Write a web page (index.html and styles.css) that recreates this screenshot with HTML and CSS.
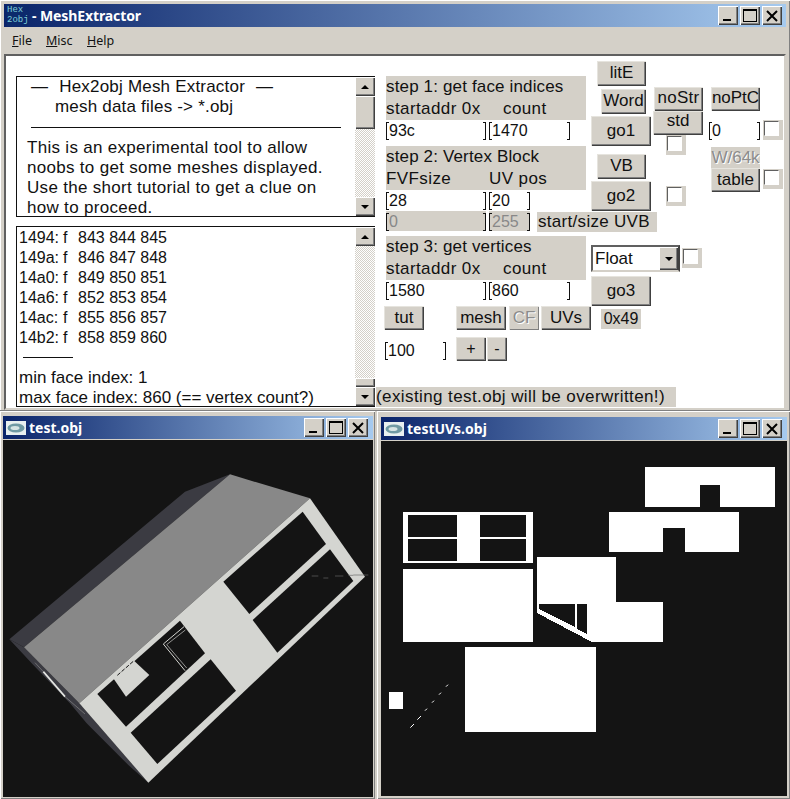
FILE: index.html
```html
<!DOCTYPE html>
<html lang="en">
<head>
<meta charset="utf-8">
<title>MeshExtractor</title>
<link rel="stylesheet" href="styles.css">
</head>
<body>
<div class="desktop">
  <section class="window main-window">
    <header class="titlebar">
      <div class="app-icon"><span>Hex</span><span>2obj</span></div>
      <span class="title-text">- MeshExtractor</span>
      <div class="caption-buttons">
        <div class="cap"><span class="cap-min"></span></div>
        <div class="cap"><span class="cap-max"></span></div>
        <div class="cap cap-close"><svg width="14" height="14" viewBox="0 0 14 14"><path d="M2 2L12 12M12 2L2 12" stroke="#000" stroke-width="2"/></svg></div>
      </div>
    </header>
    <nav class="menubar">
      <span class="menu-file"><u>F</u>ile</span>
      <span class="menu-misc"><u>M</u>isc</span>
      <span class="menu-help"><u>H</u>elp</span>
    </nav>
    <div class="client">
      <div class="left-col">
        <div class="textbox box-intro">
          <div class="text-body">
            <div class="intro-line1"><span>—</span><span>Hex2obj Mesh Extractor</span><span>—</span></div>
            <div class="intro-line2">mesh data files -&gt; *.obj</div>
            <div class="intro-rule"></div>
            <div class="intro-para">This is an experimental tool to allow</div>
            <div class="intro-para">noobs to get some meshes displayed.</div>
            <div class="intro-para">Use the short tutorial to get a clue on</div>
            <div class="intro-para">how to proceed.</div>
          </div>
          <div class="scrollbar">
            <div class="sb-btn"><i class="arrow-up"></i></div>
            <div class="sb-thumb thumb-intro"></div>
            <div class="sb-track"></div>
            <div class="sb-btn"><i class="arrow-down"></i></div>
          </div>
        </div>
        <div class="textbox box-log">
          <div class="text-body log-body">
            <div class="log-row"><span class="log-addr">1494:</span><span class="log-f">f</span><span>843 844 845</span></div>
            <div class="log-row"><span class="log-addr">149a:</span><span class="log-f">f</span><span>846 847 848</span></div>
            <div class="log-row"><span class="log-addr">14a0:</span><span class="log-f">f</span><span>849 850 851</span></div>
            <div class="log-row"><span class="log-addr">14a6:</span><span class="log-f">f</span><span>852 853 854</span></div>
            <div class="log-row"><span class="log-addr">14ac:</span><span class="log-f">f</span><span>855 856 857</span></div>
            <div class="log-row"><span class="log-addr">14b2:</span><span class="log-f">f</span><span>858 859 860</span></div>
            <div class="log-rule"></div>
            <div class="log-row log-large">min face index: 1</div>
            <div class="log-row log-large">max face index: 860 (== vertex count?)</div>
          </div>
          <div class="scrollbar">
            <div class="sb-btn"><i class="arrow-up"></i></div>
            <div class="sb-track"></div>
            <div class="sb-thumb thumb-log"></div>
            <div class="sb-btn"><i class="arrow-down"></i></div>
          </div>
        </div>
      </div>
      <div class="panel">
        <div class="panel-top">
          <div class="col-a">
            <div class="step-label"><div>step 1: get face indices</div><div class="step-sub"><span class="sub-a">startaddr 0x</span><span>count</span></div></div>
            <div class="field-row"><div class="field w100">93c</div><div class="field w81">1470</div></div>
            <div class="step-label step-gap"><div>step 2: Vertex Block</div><div class="step-sub"><span class="sub-b">FVFsize</span><span>UV pos</span></div></div>
            <div class="field-row"><div class="field w100">28</div><div class="field w41">20</div></div>
            <div class="field-row row-uvb">
              <div class="field w100 field-off">0</div><div class="field w41 field-off">255</div>
              <div class="tag tag-uvb">start/size UVB</div>
            </div>
            <div class="step-label step-gap3"><div>step 3: get vertices</div><div class="step-sub"><span class="sub-a">startaddr 0x</span><span>count</span></div></div>
            <div class="field-row"><div class="field w100">1580</div><div class="field w81">860</div></div>
          </div>
          <div class="col-b">
            <div class="btn btn-lite">litE</div>
            <div class="btn btn-word">Word</div>
            <div class="btn btn-go">go1</div>
            <div class="btn btn-vb">VB</div>
            <div class="btn btn-go">go2</div>
            <div class="combo-row">
              <div class="combo"><span class="combo-text">Float</span><div class="combo-btn"><i class="arrow-down"></i></div></div>
              <div class="check check-float"><i></i></div>
            </div>
            <div class="btn btn-go btn-go3">go3</div>
          </div>
          <div class="col-c">
            <div class="btn btn-nostr">noStr</div>
            <div class="btn btn-std">std</div>
            <div class="check check-std"><i></i></div>
            <div class="check check-go2"><i></i></div>
          </div>
          <div class="col-d">
            <div class="btn btn-noptc">noPtC</div>
            <div class="ptc-row"><div class="field w51">0</div><div class="check"><i></i></div></div>
            <div class="btn btn-w64 btn-off">W/64k</div>
            <div class="table-row"><div class="btn btn-table">table</div><div class="check check-table"><i></i></div></div>
          </div>
        </div>
        <div class="bottom-row">
          <div class="btn btn-tut">tut</div>
          <div class="btn btn-mesh">mesh</div>
          <div class="btn btn-cf btn-off">CF</div>
          <div class="btn btn-uvs">UVs</div>
          <div class="tag tag-hex">0x49</div>
        </div>
        <div class="zoom-row">
          <div class="field w60">100</div>
          <div class="btn btn-plus">+</div>
          <div class="btn btn-minus">-</div>
        </div>
        <div class="tag tag-warning">(existing test.obj will be overwritten!)</div>
      </div>
    </div>
  </section>

  <div class="viewers">
    <section class="window viewer viewer-left">
      <header class="titlebar titlebar-small">
        <svg class="gl-icon" width="20" height="14" viewBox="0 0 20 14"><rect width="20" height="14" fill="#e8f0f0"/><ellipse cx="10" cy="7" rx="8.5" ry="4.5" fill="#6f9aa4"/><ellipse cx="9" cy="7" rx="4.5" ry="2" fill="#d6e4e4"/></svg>
        <span class="title-text">test.obj</span>
        <div class="caption-buttons">
          <div class="cap"><span class="cap-min"></span></div>
          <div class="cap"><span class="cap-max"></span></div>
          <div class="cap cap-close"><svg width="14" height="14" viewBox="0 0 14 14"><path d="M2 2L12 12M12 2L2 12" stroke="#000" stroke-width="2"/></svg></div>
        </div>
      </header>
      <svg class="canvas" width="370" height="357" viewBox="9 0 1110 1071">
        <rect x="9" y="0" width="1110" height="1071" fill="#141414"/>
        <polygon points="28,598 555,155 690,103 72,622" fill="#3b3b42"/>
        <polygon points="28,598 72,622 238,790 445,1028 385,975 260,850 210,790 100,675" fill="#3b3b42"/>
        <polygon points="690,103 930,175 238,790 72,622" fill="#888888"/>
        <polygon points="930,175 1095,410 445,1028 238,790" fill="#d4d5d1"/>
        <polygon points="908,215 978,312 748,522 670,425" fill="#141414"/>
        <polygon points="990,328 1060,423 832,638 758,540" fill="#141414"/>
        <polygon points="632,658 708,752 472,972 392,878" fill="#141414"/>
        <polygon points="292,762 540,542 615,640 378,860" fill="#141414"/>
        <polygon points="340,715 402,662 448,705 378,770" fill="#d4d5d1"/>
        <path d="M352 706L402 662" stroke="#141414" stroke-width="3" stroke-dasharray="12 5"/>
        <polyline points="552,560 490,612 555,692" fill="none" stroke="#d4d5d1" stroke-width="3"/>
        <polyline points="556,570 500,614 560,684" fill="none" stroke="#d4d5d1" stroke-width="2"/>
        <polyline points="130,695 195,770" fill="none" stroke="#e4e5e1" stroke-width="5"/>
        <path d="M105 668L130 695M195 770L255 822" fill="none" stroke="#888" stroke-width="2"/>
        <path d="M935 408H955M970 414H985M1005 408H1030M1045 406H1060" stroke="#666" stroke-width="2"/>
        <path d="M1060 405H1105" stroke="#666" stroke-width="2"/>
      </svg>
    </section>
    <section class="window viewer viewer-right">
      <header class="titlebar titlebar-small">
        <svg class="gl-icon" width="20" height="14" viewBox="0 0 20 14"><rect width="20" height="14" fill="#e8f0f0"/><ellipse cx="10" cy="7" rx="8.5" ry="4.5" fill="#6f9aa4"/><ellipse cx="9" cy="7" rx="4.5" ry="2" fill="#d6e4e4"/></svg>
        <span class="title-text">testUVs.obj</span>
        <div class="caption-buttons">
          <div class="cap"><span class="cap-min"></span></div>
          <div class="cap"><span class="cap-max"></span></div>
          <div class="cap cap-close"><svg width="14" height="14" viewBox="0 0 14 14"><path d="M2 2L12 12M12 2L2 12" stroke="#000" stroke-width="2"/></svg></div>
        </div>
      </header>
      <svg class="canvas canvas-uv" width="406" height="355" viewBox="3 3 1218 1065">
        <rect x="3" y="3" width="1218" height="1065" fill="#141414"/>
        <g fill="#fff" shape-rendering="crispEdges">
          <polygon points="795,81 1185,81 1185,201 1020,201 1020,135 960,135 960,201 795,201"/>
          <polygon points="687,216 1077,216 1077,336 915,336 915,264 849,264 849,336 687,336"/>
          <rect x="69" y="216" width="390" height="153"/>
          <rect x="69" y="387" width="390" height="219"/>
          <polygon points="471,351 708,351 708,486 849,486 849,606 636,606 471,519"/>
          <rect x="255" y="621" width="393" height="255"/>
          <rect x="27" y="756" width="42" height="51"/>
        </g>
        <g fill="#141414" shape-rendering="crispEdges">
          <rect x="84" y="225" width="147" height="66"/>
          <rect x="84" y="297" width="147" height="66"/>
          <rect x="300" y="225" width="138" height="66"/>
          <rect x="300" y="297" width="138" height="66"/>
          <polygon points="477,492 585,492 585,561 477,507"/>
          <polygon points="591,492 621,492 621,582 591,567"/>
        </g>
        <path d="M91 863L102 852M112 839L123 828M135 812L141 806M156 788L162 782M177 764L183 758M198 740L204 734" stroke="#fff" stroke-width="3"/>
      </svg>
    </section>
  </div>
</div>
</body>
</html>
```
FILE: styles.css
```css
* { box-sizing: border-box; }
html, body { margin: 0; padding: 0; }
body { width: 790px; height: 799px; overflow: hidden; background: #d4d0c8; font-family: "Liberation Sans", Arial, sans-serif; font-size: 17px; color: #111; }
.desktop { width: 790px; height: 799px; display: flex; flex-direction: column; }

/* windows */
.window { background: #d4d0c8; }
.main-window { height: 411px; padding: 4px 4px 0; display: flex; flex-direction: column; border-bottom: 1px solid #808080; box-shadow: inset 1px 1px 0 #fff, inset -1px 0 0 #808080; }
.titlebar { height: 23px; flex: none; display: flex; align-items: center; background: linear-gradient(90deg, #0a246a, #a6caef); color: #fff; }
.title-text { font-family: "Noto Sans", Tahoma, sans-serif; font-weight: 700; font-size: 14px; line-height: 1; }
.main-window .title-text { margin-left: 3px; letter-spacing: -0.1px; }
.app-icon { width: 22px; height: 21px; margin-left: 3px; display: flex; flex-direction: column; font-family: "Liberation Mono", monospace; font-size: 9px; line-height: 10px; color: #7fd0d8; background: #0c2a6c; }
.caption-buttons { margin-left: auto; display: flex; gap: 2px; }
.cap { width: 20px; height: 19px; position: relative; background: #d4d0c8; box-shadow: inset 1px 1px 0 #fff, inset -1px -1px 0 #404040, inset -2px -2px 0 #808080; display: flex; align-items: center; justify-content: center; }
.cap-min { position: absolute; left: 5px; bottom: 4px; width: 8px; height: 2px; background: #000; }
.cap-max { width: 14px; height: 13px; border: 1px solid #000; border-top-width: 2px; }
.main-window .caption-buttons { margin-right: 4px; }

/* menu */
.menubar { height: 27px; flex: none; display: flex; align-items: center; font-family: "Noto Sans", Tahoma, sans-serif; font-size: 12.5px; color: #111; padding-left: 8px; }
.menu-file { width: 34px; }
.menu-misc { width: 41px; }

/* client */
.client { flex: 1; display: flex; background: #fff; border: 2px solid; border-color: #606060 #d4d0c8 #d4d0c8 #606060; padding-left: 10px; min-height: 0; }
.left-col { width: 359px; flex: none; padding-top: 20px; display: flex; flex-direction: column; gap: 9px; }
.textbox { width: 359px; display: flex; border: 1px solid #111; border-right: 0; overflow: hidden; }
.box-intro { height: 141px; }
.box-log { height: 181px; }
.text-body { flex: 1; min-width: 0; line-height: 20px; }
.box-intro .text-body { padding-left: 10px; white-space: nowrap; letter-spacing: 0.2px; }
.intro-line1 { display: flex; padding-left: 4px; gap: 11px; }
.intro-line2 { padding-left: 28px; }
.intro-rule { width: 310px; height: 1px; margin: 10px 0 10px 4px; background: #111; }
.intro-para { letter-spacing: 0.3px; }
.log-body { padding: 1px 0 0 2px; white-space: nowrap; font-size: 16px; }
.log-row { display: flex; height: 20px; }
.log-addr { width: 44px; }
.log-f { width: 15px; }
.log-rule { width: 50px; height: 1px; margin: 9px 0 10px 4px; background: #111; }
.log-large { font-size: 17px; }

/* scrollbar */
.scrollbar { width: 20px; flex: none; display: flex; flex-direction: column; }
.sb-btn, .sb-thumb, .combo-btn { background: #d4d0c8; box-shadow: inset 1px 1px 0 #fff, inset -1px -1px 0 #404040, inset -2px -2px 0 #808080; }
.sb-btn { height: 19px; flex: none; display: flex; align-items: center; justify-content: center; }
.sb-track { flex: 1; background: repeating-conic-gradient(#d4d0c8 0 25%, #fff 0 50%) 0 0 / 2px 2px; }
.thumb-intro { height: 33px; flex: none; }
.thumb-log { height: 9px; flex: none; }
.arrow-up, .arrow-down { width: 0; height: 0; border-left: 4px solid transparent; border-right: 4px solid transparent; }
.arrow-up { border-bottom: 4px solid #000; }
.arrow-down { border-top: 4px solid #000; }

/* panel */
.panel { width: 407px; margin-left: 1px; flex: none; display: flex; flex-direction: column; }
.panel-top { height: 250px; flex: none; display: flex; padding-left: 10px; }
.col-a { width: 200px; flex: none; padding-top: 20px; }
.col-b { width: 60px; flex: none; margin-left: 5px; padding-top: 5px; }
.col-c { width: 50px; flex: none; margin-left: 2px; padding-top: 31px; }
.col-d { width: 75px; flex: none; margin-left: 6px; padding-top: 31px; }
.step-label { width: 200px; height: 44px; background: #d4d0c8; line-height: 22px; white-space: nowrap; letter-spacing: 0.15px; }
.step-sub { display: flex; letter-spacing: 0.4px; }
.sub-a { width: 117px; }
.sub-b { width: 103px; }
.step-gap { margin-top: 6px; }
.step-gap3 { margin-top: 4px; }
.field-row { display: flex; gap: 3px; height: 20px; }
.row-uvb { height: 21px; margin-top: 1px; width: 271px; }
.field { height: 20px; flex: none; position: relative; padding-left: 3px; line-height: 21px; background: #fff; font-size: 16px; }
.field::before, .field::after { content: ""; position: absolute; top: 2px; bottom: 0; width: 2px; border: 1px solid #111; }
.field::before { left: 0; border-right: 0; }
.field::after { right: 0; border-left: 0; }
.w100 { width: 100px; }
.w81 { width: 81px; }
.w41 { width: 41px; }
.w51 { width: 51px; }
.w60 { width: 61px; }
.field-off { background: #d4d0c8; color: #888; }
.tag { height: 20px; line-height: 20px; background: #d4d0c8; white-space: nowrap; flex: none; }
.tag-uvb { width: 120px; margin: 1px 0 0 4px; padding-left: 1px; letter-spacing: 0.3px; }

/* buttons */
.btn { background: #d4d0c8; box-shadow: inset 1px 1px 0 #e6e4de, inset -1px -1px 0 #404040, inset -2px -2px 0 #808080; text-align: center; white-space: nowrap; overflow: hidden; flex: none; }
.btn-lite { width: 49px; height: 25px; margin-left: 6px; line-height: 24px; }
.btn-word { width: 45px; height: 25px; margin: 3px 0 0 10px; line-height: 24px; }
.btn-go { width: 60px; height: 30px; margin-top: 2px; line-height: 29px; }
.btn-vb { width: 49px; height: 25px; margin: 8px 0 0 6px; line-height: 24px; }
.btn-go3 { margin-top: 4px; }
.btn-nostr { width: 49px; height: 24px; margin-left: 1px; line-height: 22px; letter-spacing: 0.3px; }
.btn-std { width: 50px; height: 24px; line-height: 20px; }
.btn-noptc { width: 49px; height: 24px; margin-left: 2px; line-height: 22px; }
.btn-w64 { width: 49px; height: 21px; margin: 7px 0 0 2px; line-height: 21px; }
.btn-off { color: #8c8c8c; text-shadow: 1px 1px 0 #fff; box-shadow: none; }
.btn-table { width: 49px; height: 24px; line-height: 23px; margin-left: 2px; }
.btn-tut { width: 40px; height: 24px; margin-left: 8px; line-height: 23px; }
.btn-mesh { width: 50px; height: 24px; margin-left: 32px; line-height: 23px; }
.btn-cf { width: 30px; height: 24px; margin-left: 3px; line-height: 24px; box-shadow: inset 1px 1px 0 #e6e4de, inset -1px -1px 0 #808080; }
.btn-uvs { width: 50px; height: 24px; margin-left: 2px; line-height: 23px; }
.btn-plus { width: 30px; height: 24px; margin-left: 10px; line-height: 23px; font-size: 16px; }
.btn-minus { width: 20px; height: 24px; margin-left: 1px; line-height: 23px; font-size: 16px; }
.ptc-row { display: flex; margin-top: 9px; height: 20px; }
.table-row { display: flex; }
.check { width: 20px; height: 20px; background: #d4d0c8; padding: 1px 0 0 1px; flex: none; }
.check i { display: block; width: 15px; height: 15px; background: #fff; border: 1px solid; border-color: #606060 #fff #fff #606060; }
.ptc-row .check { margin-left: 3px; }
.check-std { margin-left: 13px; }
.check-go2 { margin: 31px 0 0 13px; }
.check-table { margin: 1px 0 0 3px; }
.combo-row { display: flex; width: 112px; margin-top: 34px; }
.combo { width: 89px; height: 27px; flex: none; display: flex; align-items: center; justify-content: space-between; background: #fff; border: 2px solid; border-color: #606060 #404040 #d4d0c8 #606060; padding-left: 2px; }
.combo-btn { width: 19px; height: 23px; display: flex; align-items: center; justify-content: center; }
.check-float { margin: 3px 0 0 2px; }

.bottom-row { display: flex; height: 24px; flex: none; }
.tag-hex { width: 40px; margin: 3px 0 0 10px; text-align: center; font-size: 16px; }
.zoom-row { display: flex; height: 24px; margin-top: 7px; flex: none; }
.zoom-row .field { margin: 3px 0 0 9px; }
.tag-warning { width: 300px; margin-top: 26px; letter-spacing: 0.4px; }

/* viewers */
.viewers { flex: 1; display: flex; gap: 2px; min-height: 0; }
.viewer { display: flex; flex-direction: column; box-shadow: inset 1px 1px 0 #fff, inset -1px -1px 0 #808080; }
.viewer-left { width: 375px; padding: 5px 2px 0 3px; }
.viewer-right { width: 413px; padding: 6px 3px 0 4px; }
.titlebar-small { padding-left: 3px; }
.gl-icon { margin-right: 3px; flex: none; }
.viewer .caption-buttons { margin-right: 5px; }
.canvas { display: block; flex: none; margin-top: 1px; }
```
